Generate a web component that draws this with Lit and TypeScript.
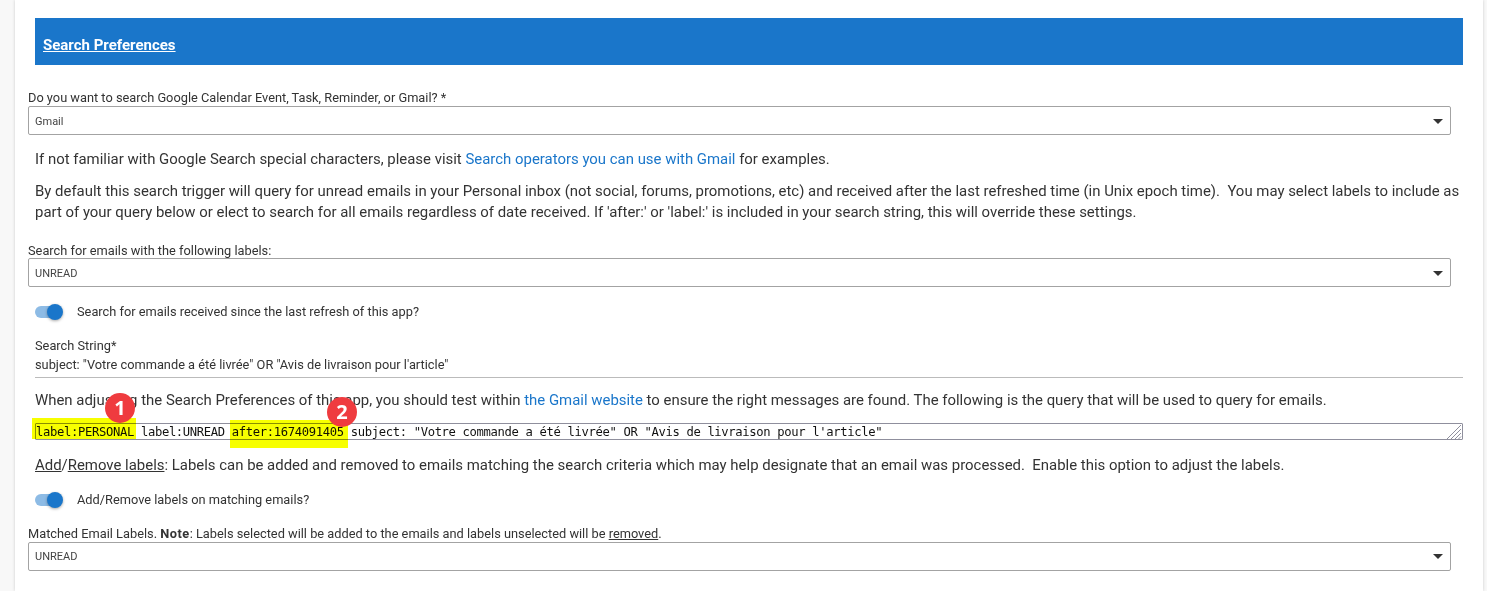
import { LitElement, html, css, svg } from "lit";
import { customElement } from "lit/decorators.js";

@customElement("app-root")
export class AppRoot extends LitElement {
  static styles = css`
    :host { display: block; background: #f8f8f8; height: 591px; overflow: hidden; font-family: Roboto, "Liberation Sans", sans-serif; color: #333; }
    .card { position: relative; box-sizing: border-box; margin: 0 4px 0 15px; height: 591px; background: #fff; box-shadow: 0 0 3px rgba(0,0,0,.18); padding: 18px 20px 0 13px; }
    .bar { margin: 0 0 0 7px; height: 47px; box-sizing: border-box; padding: 18px 0 0 8px; background: #1a76ca; color: #fff; font-size: 15px; font-weight: 700; line-height: 18px; text-decoration: underline; }
    .lbl { font-size: 12.8px; line-height: 15px; color: #333; }
    .lbl b { letter-spacing: .5px; }
    .select { box-sizing: border-box; width: 1423px; height: 29px; border: 1px solid #a3a3a3; border-radius: 2px; display: flex; align-items: center; justify-content: space-between; padding: 0 7px 0 6px; font-size: 11px; color: #444; }
    .select.low { padding-top: 2px; }
    .caret { width: 0; height: 0; border-left: 5px solid transparent; border-right: 5px solid transparent; border-top: 5px solid #333; }
    p { margin: 0 0 0 7px; font-size: 14.93px; line-height: 21px; color: #333; }
    a { color: #1a76ca; text-decoration: none; }
    .toggle-row { display: flex; align-items: center; gap: 14px; margin-left: 7px; font-size: 12.8px; line-height: 16px; }
    .toggle { position: relative; display: flex; justify-content: flex-end; width: 28px; height: 16px; }
    .track { position: absolute; left: 0; top: 2px; width: 26px; height: 12px; border-radius: 6px; background: #8dbbe5; }
    .knob { position: relative; width: 16px; height: 16px; border-radius: 50%; background: #1a76ca; box-shadow: 0 1px 3px rgba(0,0,0,.35); }
    .field { margin-left: 7px; border-bottom: 1px solid #bbb; font-size: 12.8px; line-height: 19px; padding-bottom: 3px; }
    .query { position: relative; margin-left: 7px; height: 17px; box-sizing: border-box; border: 1px solid #8f8f9d; border-radius: 1px; font-family: "DejaVu Sans Mono", monospace; font-size: 12.2px; letter-spacing: -0.344px; line-height: 16px; color: #111; white-space: pre; }
    .grip { position: absolute; right: 0; bottom: 0; }
    .hl { position: absolute; background: #f7ff00; mix-blend-mode: multiply; }
    .hl1 { left: 17px; top: 418px; width: 104px; height: 21px; }
    .hl2 { left: 215px; top: 420px; width: 118px; height: 28px; }
    .badge { position: absolute; width: 30px; height: 30px; border-radius: 50%; background: #ef3b3f; color: #fff; font: 700 20px/30px "Open Sans", sans-serif; text-align: center; }
    .b1 { left: 90px; top: 393px; }
    .b2 { left: 312px; top: 397px; }
    u { text-decoration: underline; }
    .mt1 { margin-top: 1px; }
    .mt11 { margin-top: 11px; }
    .mt12 { margin-top: 12px; }
    .mt14 { margin-top: 14px; }
    .mt15 { margin-top: 15px; }
    .mt16 { margin-top: 16px; }
    .mt17 { margin-top: 17px; }
    .mt18 { margin-top: 18px; }
    .mt20 { margin-top: 20px; }
    .mt25 { margin-top: 25px; }
  `;

  private toggle() {
    return html`<span class="toggle"><span class="track"></span><span class="knob"></span></span>`;
  }

  private grip() {
    return html`<svg class="grip" width="16" height="15" viewBox="0 0 16 15" fill="none" stroke="#8f8f9d" stroke-width="1">
      ${svg`<path d="M1 15 15 1M5 15 15 5M9 15 15 9M12.500 15 15 12.500"/>`}
    </svg>`;
  }

  render() {
    return html`<div class="card">
      <div class="bar">Search Preferences</div>
      <div class="lbl mt25">Do you want to search Google Calendar Event, Task, Reminder, or Gmail? *</div>
      <div class="select low mt1"><span>Gmail</span><span class="caret"></span></div>
      <p class="mt14">If not familiar with Google Search special characters, please visit <a>Search operators you can use with Gmail</a> for examples.</p>
      <p class="mt11">By default this search trigger will query for unread emails in your Personal inbox (not social, forums, promotions, etc) and received after the last refreshed time (in Unix epoch time).&nbsp; You may select labels to include as part of your query below or elect to search for all emails regardless of date received. If 'after:' or 'label:' is included in your search string, this will override these settings.</p>
      <div class="lbl mt20">Search for emails with the following labels:</div>
      <div class="select low"><span>UNREAD</span><span class="caret"></span></div>
      <div class="toggle-row mt17">${this.toggle()}<span>Search for emails received since the last refresh of this app?</span></div>
      <div class="field mt16"><div>Search String*</div><div>subject: "Votre commande a été livrée" OR "Avis de livraison pour l'article"</div></div>
      <p class="mt12">When adjusting the Search Preferences of this app, you should test within <a>the Gmail website</a> to ensure the right messages are found. The following is the query that will be used to query for emails.</p>
      <div class="query mt12">label:PERSONAL label:UNREAD after:1674091405 subject: "Votre commande a été livrée" OR "Avis de livraison pour l'article"${this.grip()}</div>
      <p class="mt15"><u>Add</u>/<u>Remove labels</u>: Labels can be added and removed to emails matching the search criteria which may help designate that an email was processed.&nbsp; Enable this option to adjust the labels.</p>
      <div class="toggle-row mt16">${this.toggle()}<span>Add/Remove labels on matching emails?</span></div>
      <div class="lbl mt18">Matched Email Labels. <b>Note</b>: Labels selected will be added to the emails and labels unselected will be <u>removed</u>.</div>
      <div class="select mt1"><span>UNREAD</span><span class="caret"></span></div>
      <div class="hl hl1"></div>
      <div class="hl hl2"></div>
      <div class="badge b1">1</div>
      <div class="badge b2">2</div>
    </div>`;
  }
}
